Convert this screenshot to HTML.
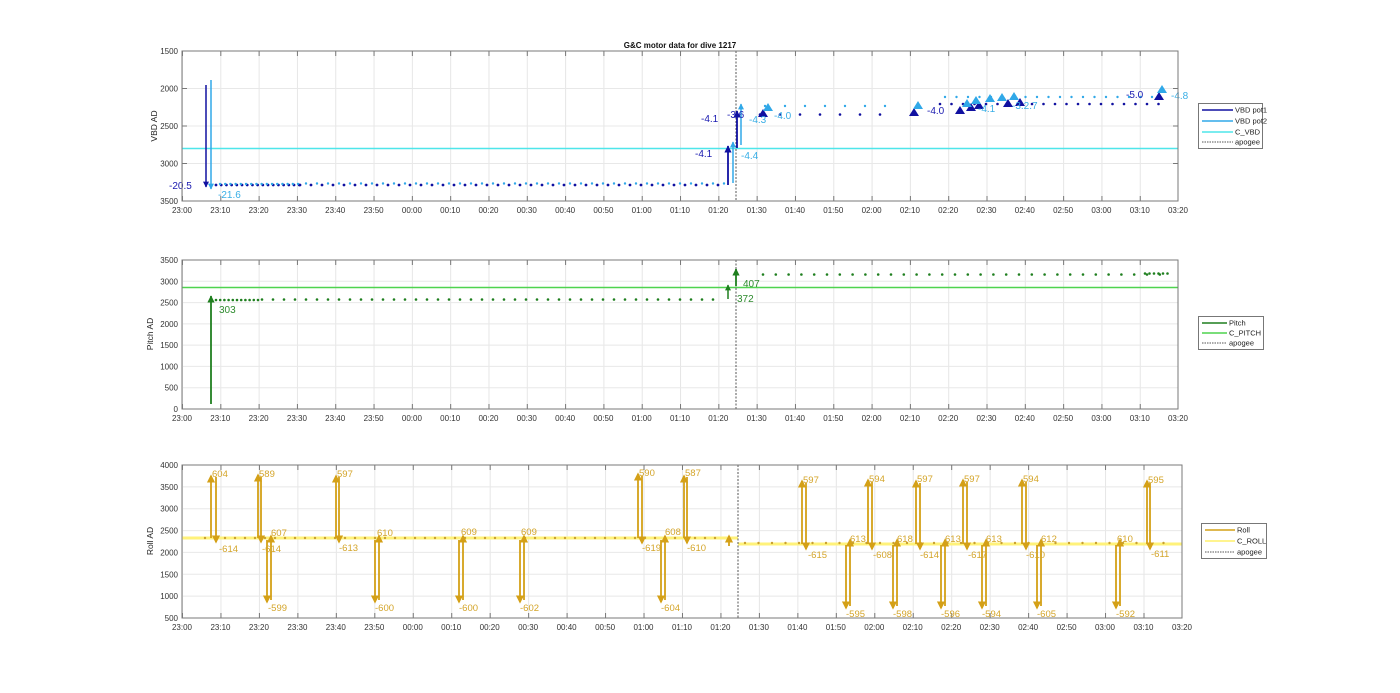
<!DOCTYPE html>
<html><head><meta charset="utf-8"><style>
html,body{margin:0;padding:0;background:#fff;}
svg{display:block;font-family:"Liberation Sans",sans-serif;}
.tl{font-size:8px;fill:#333;text-anchor:middle;}
.yl{font-size:8px;fill:#333;text-anchor:end;}
.ax{fill:none;stroke:#7a7a7a;stroke-width:1;}
.g{stroke:#e8e8e8;stroke-width:1;}
.lg{font-size:7.5px;fill:#222;}
.gold{font-size:9.5px;fill:#d4a52a;}
</style></head><body>
<svg width="1400" height="693" viewBox="0 0 1400 693">
<defs>
<pattern id="vg1" x="182" y="0" width="38.31" height="693" patternUnits="userSpaceOnUse"><line x1="0.5" y1="0" x2="0.5" y2="693" stroke="#e6e6e6"/></pattern>
<pattern id="vg3" x="182" y="0" width="38.46" height="693" patternUnits="userSpaceOnUse"><line x1="0.5" y1="0" x2="0.5" y2="693" stroke="#e6e6e6"/></pattern>
<pattern id="tk1" x="182" y="0" width="38.31" height="693" patternUnits="userSpaceOnUse"><line x1="0.5" y1="0" x2="0.5" y2="693" stroke="#777"/></pattern>
<pattern id="tk3" x="182" y="0" width="38.46" height="693" patternUnits="userSpaceOnUse"><line x1="0.5" y1="0" x2="0.5" y2="693" stroke="#777"/></pattern>
<marker id="an" viewBox="0 0 10 10" refX="9" refY="5" markerWidth="4" markerHeight="4" orient="auto"><path d="M0,0L10,5L0,10z" fill="#1010a0"/></marker>
<marker id="ac" viewBox="0 0 10 10" refX="9" refY="5" markerWidth="4" markerHeight="4" orient="auto"><path d="M0,0L10,5L0,10z" fill="#30a8e8"/></marker>
<marker id="ag" viewBox="0 0 10 10" refX="9" refY="5" markerWidth="4" markerHeight="4" orient="auto"><path d="M0,0L10,5L0,10z" fill="#1f7f1f"/></marker>
<marker id="ay" viewBox="0 0 10 10" refX="8" refY="5" markerWidth="4.5" markerHeight="4.5" orient="auto"><path d="M0,0L10,5L0,10z" fill="#d4a017"/></marker>
</defs>

<!-- ============ TOP ============ -->
<text x="680" y="48" style="font-size:8px;font-weight:bold;fill:#111" text-anchor="middle">G&amp;C motor data for dive 1217</text>
<rect x="182" y="51" width="996" height="150" fill="url(#vg1)"/>
<g class="g"><line x1="182" y1="88.5" x2="1178" y2="88.5"/><line x1="182" y1="126" x2="1178" y2="126"/><line x1="182" y1="163.5" x2="1178" y2="163.5"/></g>
<rect x="182" y="51" width="996" height="5" fill="url(#tk1)"/><rect x="182" y="196" width="996" height="5" fill="url(#tk1)"/>
<g stroke="#777"><line x1="182" y1="88.5" x2="187" y2="88.5"/><line x1="182" y1="126" x2="187" y2="126"/><line x1="182" y1="163.5" x2="187" y2="163.5"/><line x1="1173" y1="88.5" x2="1178" y2="88.5"/><line x1="1173" y1="126" x2="1178" y2="126"/><line x1="1173" y1="163.5" x2="1178" y2="163.5"/></g>
<line x1="182" y1="148.5" x2="1178" y2="148.5" stroke="#4ee6ea" stroke-width="1.5"/>
<line x1="736" y1="51" x2="736" y2="201" stroke="#555" stroke-dasharray="2 1.5"/>
<line x1="216" y1="185" x2="300" y2="185" stroke="#1010a0" stroke-width="2.8" stroke-linecap="round" stroke-dasharray="0 5.2"/>
<line x1="220" y1="184" x2="300" y2="184" stroke="#30a8e8" stroke-width="2.4" stroke-linecap="round" stroke-dasharray="0 5.2"/>
<line x1="300" y1="185" x2="725" y2="185" stroke="#1010a0" stroke-width="2.8" stroke-linecap="round" stroke-dasharray="0 11"/>
<line x1="306" y1="183.5" x2="725" y2="183.5" stroke="#30a8e8" stroke-width="2.4" stroke-linecap="round" stroke-dasharray="0 11"/>
<line x1="760" y1="114.5" x2="900" y2="114.5" stroke="#1010a0" stroke-width="2.6" stroke-linecap="round" stroke-dasharray="0 20"/>
<line x1="765" y1="106" x2="900" y2="106" stroke="#30a8e8" stroke-width="2.4" stroke-linecap="round" stroke-dasharray="0 20"/>
<line x1="940" y1="104" x2="1160" y2="104" stroke="#1010a0" stroke-width="2.6" stroke-linecap="round" stroke-dasharray="0 11.5"/>
<line x1="945" y1="97" x2="1160" y2="97" stroke="#30a8e8" stroke-width="2.4" stroke-linecap="round" stroke-dasharray="0 11.5"/>
<line x1="206" y1="85" x2="206" y2="187" stroke="#1010a0" stroke-width="1.5" marker-end="url(#an)"/>
<line x1="211" y1="80" x2="211" y2="189" stroke="#30a8e8" stroke-width="1.5" marker-end="url(#ac)"/>
<line x1="728" y1="185" x2="728" y2="146" stroke="#1010a0" stroke-width="1.8" marker-end="url(#an)"/>
<line x1="733" y1="183" x2="733" y2="142" stroke="#30a8e8" stroke-width="1.5" marker-end="url(#ac)"/>
<line x1="737" y1="148" x2="737" y2="111" stroke="#1010a0" stroke-width="1.8" marker-end="url(#an)"/>
<line x1="741" y1="145" x2="741" y2="104" stroke="#30a8e8" stroke-width="1.5" marker-end="url(#ac)"/>
<g fill="#1010a0"><path d="M758,117l5,-8l5,8z"/><path d="M909,116l5,-8l5,8z"/><path d="M955,114l5,-8l5,8z"/><path d="M966,111l5,-8l5,8z"/><path d="M974,109l5,-8l5,8z"/><path d="M1003,107l5,-8l5,8z"/><path d="M1015,106l5,-8l5,8z"/><path d="M1154,100l5,-8l5,8z"/></g>
<g fill="#30a8e8"><path d="M763,111l5,-8l5,8z"/><path d="M913,109l5,-8l5,8z"/><path d="M962,107l5,-8l5,8z"/><path d="M971,104l5,-8l5,8z"/><path d="M985,102l5,-8l5,8z"/><path d="M997,101l5,-8l5,8z"/><path d="M1009,100l5,-8l5,8z"/><path d="M1157,93l5,-8l5,8z"/></g>
<g style="font-size:10px" fill="#1a1ab0"><text x="169" y="189">-20.5</text><text x="695" y="157">-4.1</text><text x="701" y="122">-4.1</text><text x="727" y="118">-3.6</text><text x="927" y="114">-4.0</text><text x="1126" y="98">-5.0</text></g>
<g style="font-size:10px" fill="#38aee6"><text x="218" y="198">-21.6</text><text x="741" y="159">-4.4</text><text x="749" y="123">-4.3</text><text x="774" y="119">-4.0</text><text x="978" y="112">-4.1</text><text x="1012" y="109">-3.2.7</text><text x="1171" y="99">-4.8</text></g>
<rect class="ax" x="182" y="51" width="996" height="150"/>
<g class="yl"><text x="178" y="54">1500</text><text x="178" y="91.5">2000</text><text x="178" y="129">2500</text><text x="178" y="166.5">3000</text><text x="178" y="204">3500</text></g>
<text transform="translate(157,126) rotate(-90)" style="font-size:8.5px;fill:#222" text-anchor="middle">VBD AD</text>
<g class="tl"><text x="182" y="213">23:00</text><text x="220.3" y="213">23:10</text><text x="258.6" y="213">23:20</text><text x="296.9" y="213">23:30</text><text x="335.2" y="213">23:40</text><text x="373.6" y="213">23:50</text><text x="411.9" y="213">00:00</text><text x="450.2" y="213">00:10</text><text x="488.5" y="213">00:20</text><text x="526.8" y="213">00:30</text><text x="565.1" y="213">00:40</text><text x="603.4" y="213">00:50</text><text x="641.7" y="213">01:00</text><text x="680" y="213">01:10</text><text x="718.3" y="213">01:20</text><text x="756.7" y="213">01:30</text><text x="795" y="213">01:40</text><text x="833.3" y="213">01:50</text><text x="871.6" y="213">02:00</text><text x="909.9" y="213">02:10</text><text x="948.2" y="213">02:20</text><text x="986.5" y="213">02:30</text><text x="1024.8" y="213">02:40</text><text x="1063.1" y="213">02:50</text><text x="1101.4" y="213">03:00</text><text x="1139.8" y="213">03:10</text><text x="1178" y="213">03:20</text></g>
<rect x="1198.5" y="103.5" width="64" height="45" fill="#fff" stroke="#777"/>
<line x1="1202" y1="110" x2="1233" y2="110" stroke="#1010a0" stroke-width="1.5"/><text class="lg" x="1235" y="112.5">VBD pot1</text>
<line x1="1202" y1="121" x2="1233" y2="121" stroke="#30a8e8" stroke-width="1.5"/><text class="lg" x="1235" y="123.5">VBD pot2</text>
<line x1="1202" y1="132" x2="1233" y2="132" stroke="#4ee6ea" stroke-width="1.5"/><text class="lg" x="1235" y="134.5">C_VBD</text>
<line x1="1202" y1="142" x2="1233" y2="142" stroke="#555" stroke-dasharray="1.5 1"/><text class="lg" x="1235" y="144.5">apogee</text>

<!-- ============ MIDDLE ============ -->
<rect x="182" y="260" width="996" height="149" fill="url(#vg1)"/>
<g class="g"><line x1="182" y1="281.3" x2="1178" y2="281.3"/><line x1="182" y1="302.6" x2="1178" y2="302.6"/><line x1="182" y1="323.9" x2="1178" y2="323.9"/><line x1="182" y1="345.1" x2="1178" y2="345.1"/><line x1="182" y1="366.4" x2="1178" y2="366.4"/><line x1="182" y1="387.7" x2="1178" y2="387.7"/></g>
<rect x="182" y="260" width="996" height="5" fill="url(#tk1)"/><rect x="182" y="404" width="996" height="5" fill="url(#tk1)"/>
<line x1="182" y1="287.5" x2="1178" y2="287.5" stroke="#4fd34f" stroke-width="1.5"/>
<line x1="736" y1="260" x2="736" y2="409" stroke="#555" stroke-dasharray="2 1.5"/>
<line x1="216" y1="300" x2="258" y2="300" stroke="#1f7f1f" stroke-width="2.6" stroke-linecap="round" stroke-dasharray="0 4.2"/>
<line x1="262" y1="299.5" x2="720" y2="299.5" stroke="#1f7f1f" stroke-width="2.6" stroke-linecap="round" stroke-dasharray="0 11"/>
<line x1="763" y1="274.5" x2="1160" y2="274.5" stroke="#1f7f1f" stroke-width="2.6" stroke-linecap="round" stroke-dasharray="0 12.8"/>
<line x1="1145" y1="273.5" x2="1172" y2="273.5" stroke="#1f7f1f" stroke-width="2.6" stroke-linecap="round" stroke-dasharray="0 4.5"/>
<line x1="211" y1="404" x2="211" y2="296" stroke="#1f7f1f" stroke-width="1.8" marker-end="url(#ag)"/>
<line x1="728" y1="299" x2="728" y2="285" stroke="#1f7f1f" stroke-width="1.5" marker-end="url(#ag)"/>
<line x1="736" y1="286" x2="736" y2="269" stroke="#1f7f1f" stroke-width="1.8" marker-end="url(#ag)"/>
<g style="font-size:10px" fill="#2e8b2e"><text x="219" y="313">303</text><text x="737" y="302">372</text><text x="743" y="287">407</text></g>
<rect class="ax" x="182" y="260" width="996" height="149"/>
<g class="yl"><text x="178" y="263">3500</text><text x="178" y="284.3">3000</text><text x="178" y="305.6">2500</text><text x="178" y="326.9">2000</text><text x="178" y="348.1">1500</text><text x="178" y="369.4">1000</text><text x="178" y="390.7">500</text><text x="178" y="412">0</text></g>
<text transform="translate(153,334) rotate(-90)" style="font-size:8.5px;fill:#222" text-anchor="middle">Pitch AD</text>
<g class="tl"><text x="182" y="421">23:00</text><text x="220.3" y="421">23:10</text><text x="258.6" y="421">23:20</text><text x="296.9" y="421">23:30</text><text x="335.2" y="421">23:40</text><text x="373.6" y="421">23:50</text><text x="411.9" y="421">00:00</text><text x="450.2" y="421">00:10</text><text x="488.5" y="421">00:20</text><text x="526.8" y="421">00:30</text><text x="565.1" y="421">00:40</text><text x="603.4" y="421">00:50</text><text x="641.7" y="421">01:00</text><text x="680" y="421">01:10</text><text x="718.3" y="421">01:20</text><text x="756.7" y="421">01:30</text><text x="795" y="421">01:40</text><text x="833.3" y="421">01:50</text><text x="871.6" y="421">02:00</text><text x="909.9" y="421">02:10</text><text x="948.2" y="421">02:20</text><text x="986.5" y="421">02:30</text><text x="1024.8" y="421">02:40</text><text x="1063.1" y="421">02:50</text><text x="1101.4" y="421">03:00</text><text x="1139.8" y="421">03:10</text><text x="1178" y="421">03:20</text></g>
<rect x="1198.5" y="316.5" width="65" height="33" fill="#fff" stroke="#777"/>
<line x1="1202" y1="323" x2="1227" y2="323" stroke="#1f7f1f" stroke-width="1.5"/><text class="lg" x="1229" y="325.5">Pitch</text>
<line x1="1202" y1="333" x2="1227" y2="333" stroke="#4fd34f" stroke-width="1.5"/><text class="lg" x="1229" y="335.5">C_PITCH</text>
<line x1="1202" y1="343" x2="1227" y2="343" stroke="#555" stroke-dasharray="1.5 1"/><text class="lg" x="1229" y="345.5">apogee</text>

<!-- ============ BOTTOM ============ -->
<rect x="182" y="465" width="1000" height="153" fill="url(#vg3)"/>
<g class="g"><line x1="182" y1="486.9" x2="1182" y2="486.9"/><line x1="182" y1="508.7" x2="1182" y2="508.7"/><line x1="182" y1="530.6" x2="1182" y2="530.6"/><line x1="182" y1="552.4" x2="1182" y2="552.4"/><line x1="182" y1="574.3" x2="1182" y2="574.3"/><line x1="182" y1="596.1" x2="1182" y2="596.1"/></g>
<rect x="182" y="465" width="1000" height="5" fill="url(#tk3)"/><rect x="182" y="613" width="1000" height="5" fill="url(#tk3)"/>
<line x1="182" y1="538" x2="738" y2="538" stroke="#fff27a" stroke-width="3"/>
<line x1="738" y1="544" x2="1182" y2="544" stroke="#fff27a" stroke-width="3"/>
<line x1="738" y1="465" x2="738" y2="618" stroke="#555" stroke-dasharray="2 1.5"/>
<line x1="205" y1="538" x2="720" y2="538" stroke="#c9a030" stroke-width="2.4" stroke-linecap="round" stroke-dasharray="0 10"/>
<line x1="745" y1="543" x2="1175" y2="543" stroke="#c9a030" stroke-width="2.4" stroke-linecap="round" stroke-dasharray="0 13.5"/>
<g stroke="#d4a017" stroke-width="1.8">
<line x1="211" y1="538" x2="211" y2="476" marker-end="url(#ay)"/><line x1="216" y1="477" x2="216" y2="542" marker-end="url(#ay)"/>
<line x1="258" y1="538" x2="258" y2="475" marker-end="url(#ay)"/><line x1="261" y1="477" x2="261" y2="542" marker-end="url(#ay)"/>
<line x1="336" y1="538" x2="336" y2="476" marker-end="url(#ay)"/><line x1="339" y1="477" x2="339" y2="542" marker-end="url(#ay)"/>
<line x1="638" y1="538" x2="638" y2="474" marker-end="url(#ay)"/><line x1="642" y1="476" x2="642" y2="543" marker-end="url(#ay)"/>
<line x1="684" y1="538" x2="684" y2="476" marker-end="url(#ay)"/><line x1="687" y1="477" x2="687" y2="543" marker-end="url(#ay)"/>
<line x1="267" y1="540" x2="267" y2="602" marker-end="url(#ay)"/><line x1="271" y1="600" x2="271" y2="536" marker-end="url(#ay)"/>
<line x1="375" y1="540" x2="375" y2="602" marker-end="url(#ay)"/><line x1="379" y1="600" x2="379" y2="536" marker-end="url(#ay)"/>
<line x1="459" y1="540" x2="459" y2="602" marker-end="url(#ay)"/><line x1="463" y1="600" x2="463" y2="536" marker-end="url(#ay)"/>
<line x1="520" y1="540" x2="520" y2="602" marker-end="url(#ay)"/><line x1="524" y1="600" x2="524" y2="536" marker-end="url(#ay)"/>
<line x1="661" y1="540" x2="661" y2="602" marker-end="url(#ay)"/><line x1="665" y1="600" x2="665" y2="536" marker-end="url(#ay)"/>
<line x1="729" y1="546" x2="729" y2="536" marker-end="url(#ay)"/>
<line x1="802" y1="544" x2="802" y2="481" marker-end="url(#ay)"/><line x1="806" y1="483" x2="806" y2="549" marker-end="url(#ay)"/>
<line x1="868" y1="544" x2="868" y2="480" marker-end="url(#ay)"/><line x1="872" y1="482" x2="872" y2="549" marker-end="url(#ay)"/>
<line x1="916" y1="544" x2="916" y2="481" marker-end="url(#ay)"/><line x1="920" y1="483" x2="920" y2="549" marker-end="url(#ay)"/>
<line x1="963" y1="544" x2="963" y2="480" marker-end="url(#ay)"/><line x1="967" y1="482" x2="967" y2="549" marker-end="url(#ay)"/>
<line x1="1022" y1="544" x2="1022" y2="480" marker-end="url(#ay)"/><line x1="1026" y1="482" x2="1026" y2="549" marker-end="url(#ay)"/>
<line x1="1147" y1="544" x2="1147" y2="481" marker-end="url(#ay)"/><line x1="1150" y1="483" x2="1150" y2="549" marker-end="url(#ay)"/>
<line x1="846" y1="545" x2="846" y2="608" marker-end="url(#ay)"/><line x1="850" y1="606" x2="850" y2="540" marker-end="url(#ay)"/>
<line x1="893" y1="545" x2="893" y2="608" marker-end="url(#ay)"/><line x1="897" y1="606" x2="897" y2="540" marker-end="url(#ay)"/>
<line x1="941" y1="545" x2="941" y2="608" marker-end="url(#ay)"/><line x1="945" y1="606" x2="945" y2="540" marker-end="url(#ay)"/>
<line x1="982" y1="545" x2="982" y2="608" marker-end="url(#ay)"/><line x1="986" y1="606" x2="986" y2="540" marker-end="url(#ay)"/>
<line x1="1037" y1="545" x2="1037" y2="608" marker-end="url(#ay)"/><line x1="1041" y1="606" x2="1041" y2="540" marker-end="url(#ay)"/>
<line x1="1116" y1="545" x2="1116" y2="608" marker-end="url(#ay)"/><line x1="1120" y1="606" x2="1120" y2="540" marker-end="url(#ay)"/>
</g>
<g class="gold">
<text x="212" y="477">604</text><text x="219" y="552">-614</text>
<text x="259" y="477">589</text><text x="262" y="552">-614</text>
<text x="271" y="536">607</text><text x="268" y="611">-599</text>
<text x="337" y="477">597</text><text x="339" y="551">-613</text>
<text x="377" y="536">610</text><text x="375" y="611">-600</text>
<text x="461" y="535">609</text><text x="459" y="611">-600</text>
<text x="521" y="535">609</text><text x="520" y="611">-602</text>
<text x="639" y="476">590</text><text x="642" y="551">-619</text>
<text x="665" y="535">608</text><text x="661" y="611">-604</text>
<text x="685" y="476">587</text><text x="687" y="551">-610</text>
<text x="803" y="483">597</text><text x="808" y="558">-615</text>
<text x="850" y="542">613</text><text x="846" y="617">-595</text>
<text x="869" y="482">594</text><text x="873" y="558">-608</text>
<text x="897" y="542">618</text><text x="893" y="617">-598</text>
<text x="917" y="482">597</text><text x="920" y="558">-614</text>
<text x="945" y="542">613</text><text x="941" y="617">-596</text>
<text x="964" y="482">597</text><text x="968" y="558">-617</text>
<text x="986" y="542">613</text><text x="982" y="617">-594</text>
<text x="1023" y="482">594</text><text x="1026" y="558">-610</text>
<text x="1041" y="542">612</text><text x="1037" y="617">-605</text>
<text x="1117" y="542">610</text><text x="1116" y="617">-592</text>
<text x="1148" y="483">595</text><text x="1151" y="557">-611</text>
</g>
<rect class="ax" x="182" y="465" width="1000" height="153"/>
<g class="yl"><text x="178" y="468">4000</text><text x="178" y="489.9">3500</text><text x="178" y="511.7">3000</text><text x="178" y="533.6">2500</text><text x="178" y="555.4">2000</text><text x="178" y="577.3">1500</text><text x="178" y="599.1">1000</text><text x="178" y="621">500</text></g>
<text transform="translate(153,541) rotate(-90)" style="font-size:8.5px;fill:#222" text-anchor="middle">Roll AD</text>
<g class="tl"><text x="182" y="630">23:00</text><text x="220.5" y="630">23:10</text><text x="258.9" y="630">23:20</text><text x="297.4" y="630">23:30</text><text x="335.8" y="630">23:40</text><text x="374.3" y="630">23:50</text><text x="412.8" y="630">00:00</text><text x="451.2" y="630">00:10</text><text x="489.7" y="630">00:20</text><text x="528.1" y="630">00:30</text><text x="566.6" y="630">00:40</text><text x="605.1" y="630">00:50</text><text x="643.5" y="630">01:00</text><text x="682" y="630">01:10</text><text x="720.4" y="630">01:20</text><text x="758.9" y="630">01:30</text><text x="797.4" y="630">01:40</text><text x="835.8" y="630">01:50</text><text x="874.3" y="630">02:00</text><text x="912.7" y="630">02:10</text><text x="951.2" y="630">02:20</text><text x="989.7" y="630">02:30</text><text x="1028.1" y="630">02:40</text><text x="1066.6" y="630">02:50</text><text x="1105" y="630">03:00</text><text x="1143.5" y="630">03:10</text><text x="1182" y="630">03:20</text></g>
<rect x="1201.5" y="523.5" width="65" height="35" fill="#fff" stroke="#777"/>
<line x1="1205" y1="530" x2="1235" y2="530" stroke="#d4a017" stroke-width="1.5"/><text class="lg" x="1237" y="532.5">Roll</text>
<line x1="1205" y1="541" x2="1235" y2="541" stroke="#fff06a" stroke-width="1.5"/><text class="lg" x="1237" y="543.5">C_ROLL</text>
<line x1="1205" y1="552" x2="1235" y2="552" stroke="#555" stroke-dasharray="1.5 1"/><text class="lg" x="1237" y="554.5">apogee</text>
</svg>
</body></html>
